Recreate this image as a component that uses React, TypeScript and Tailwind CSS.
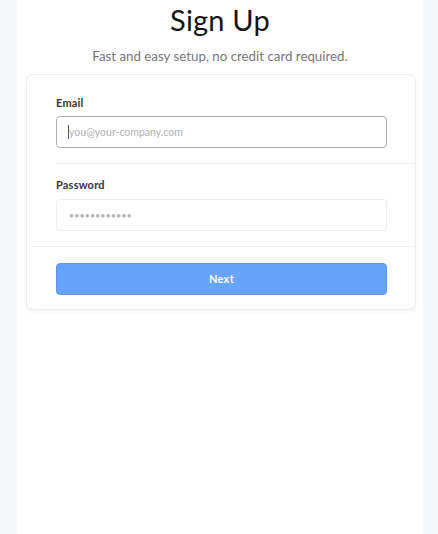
export default function App() {
  return (
    <div className="min-h-[534px] bg-[#f6f7f9] font-['Lato',sans-serif]">
      <div className="ml-[17px] w-[406px] min-h-[534px] bg-white pt-[2px]">
        {/* Heading */}
        <h1 className="text-center text-[29px] leading-[36px] text-[#151515] tracking-[0.2px]">
          Sign Up
        </h1>
        <p className="mt-[9px] text-center text-[13.3px] leading-[18px] text-[#76767b]">
          Fast and easy setup, no credit card required.
        </p>

        {/* Card */}
        <div className="ml-[9px] mt-[9px] w-[390px] rounded-[7px] border border-[#ececef] bg-white shadow-[0_2px_4px_rgba(0,0,0,0.04)]">
          <div className="ml-[29px] pr-[28px] pt-[21px] pb-[15px] border-b border-[#efeff1]">
            <label className="block text-[11px] leading-[14px] font-bold text-[#36363a] tracking-[0.2px]">
              Email
            </label>
            <div className="relative mt-[6px]">
              <input
                type="email"
                placeholder="you@your-company.com"
                className="h-[32px] w-full rounded-[4px] border border-[#a9b0b8] px-[12px] text-[10.5px] text-[#333] placeholder:text-[#b0b0b4] outline-none"
              />
              <span className="absolute left-[12px] top-[9px] h-[14px] w-px bg-[#555]" />
            </div>
          </div>

          <div className="ml-[5px] pl-[24px] pr-[28px] pt-[14px] pb-[15px] border-b border-[#efeff1]">
            <label className="block text-[11px] leading-[14px] font-bold text-[#36363a] tracking-[0.2px]">
              Password
            </label>
            <input
              type="password"
              placeholder="••••••••••••"
              className="mt-[7px] h-[32px] w-full rounded-[4px] border border-[#eeeef0] px-[12px] text-[9px] text-[#333] placeholder:text-[#b4b4b8] outline-none"
            />
          </div>

          <div className="pl-[29px] pr-[28px] pt-[16px] pb-[14px]">
            <button
              type="button"
              className="h-[32px] w-full rounded-[4px] border border-[#5d96ec] bg-[#66a4fb] text-[11px] font-bold text-white tracking-[0.3px]"
            >
              Next
            </button>
          </div>
        </div>
      </div>
    </div>
  );
}
